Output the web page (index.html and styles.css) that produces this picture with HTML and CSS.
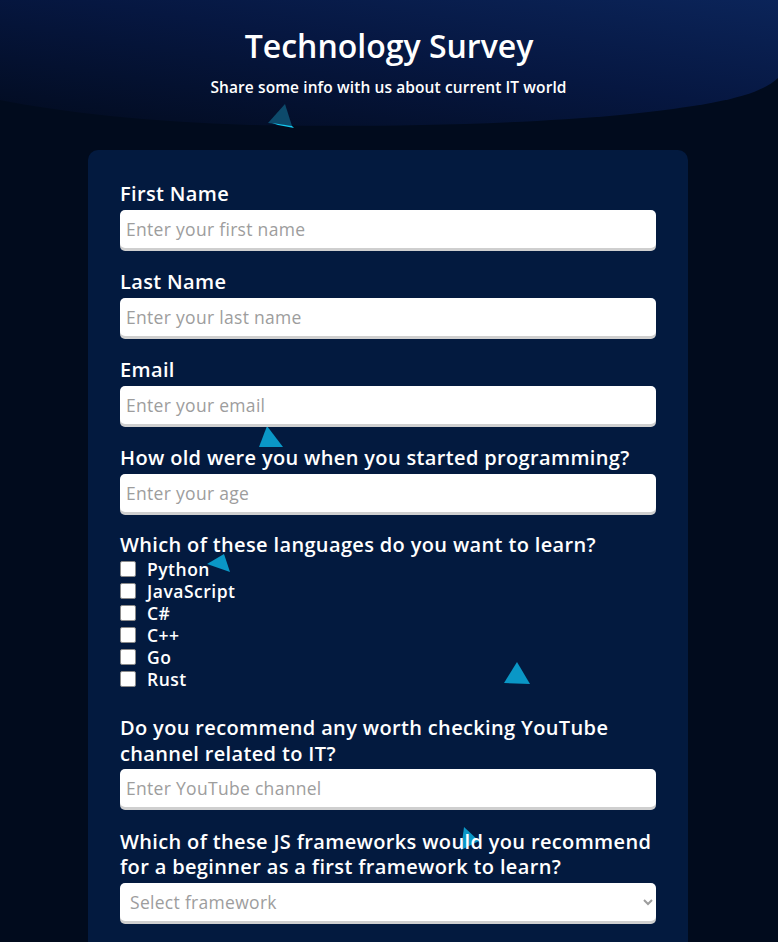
FILE: index.html
```html
<!DOCTYPE html>
<html lang="en">
<head>
    <meta charset="UTF-8">
    <title>Technology Survey</title>
    <link rel="stylesheet" href="styles.css">
</head>
<body>
    <svg class="wave" width="778" height="140" viewBox="0 0 778 140">
        <defs>
            <linearGradient id="waveFill" x1="0" y1="1" x2="1" y2="0">
                <stop offset="0" stop-color="#020b1f"/>
                <stop offset="0.55" stop-color="#061741"/>
                <stop offset="1" stop-color="#0b2459"/>
            </linearGradient>
        </defs>
        <path d="M0,0 H778 V78 C760,95 720,105 620,115 C500,126 350,127 250,125 C150,122 60,112 0,100 Z" fill="url(#waveFill)"/>
    </svg>

    <svg class="tri tri-1" width="30" height="28" viewBox="0 0 30 28"><polygon points="17,0 24,22 0,19" fill="#0d4a6b"/><polygon points="4,19 24,22 26,24 10,21" fill="#14c8f0"/></svg>
    <svg class="tri tri-2" width="26" height="22" viewBox="0 0 26 22"><polygon points="8,0 24,21 0,21" fill="#0a97c6"/></svg>
    <svg class="tri tri-3" width="26" height="22" viewBox="0 0 26 22"><polygon points="17,0 23,18 0,10" fill="#0a97c6"/></svg>
    <svg class="tri tri-4" width="28" height="24" viewBox="0 0 28 24"><polygon points="13,0 26,22 0,21" fill="#0a97c6"/></svg>
    <svg class="tri tri-5" width="20" height="24" viewBox="0 0 20 24"><polygon points="3,0 18,14 0,23" fill="#0a97c6"/></svg>

    <header class="header">
        <h1 class="title">Technology Survey</h1>
        <p class="subtitle">Share some info with us about current IT world</p>
    </header>

    <form class="survey">
        <div class="group">
            <label class="label" for="first-name">First Name</label>
            <input class="field" id="first-name" type="text" placeholder="Enter your first name">
        </div>
        <div class="group">
            <label class="label" for="last-name">Last Name</label>
            <input class="field" id="last-name" type="text" placeholder="Enter your last name">
        </div>
        <div class="group">
            <label class="label" for="email">Email</label>
            <input class="field" id="email" type="email" placeholder="Enter your email">
        </div>
        <div class="group">
            <label class="label" for="age">How old were you when you started programming?</label>
            <input class="field" id="age" type="number" placeholder="Enter your age">
        </div>
        <div class="group group-checks">
            <span class="label">Which of these languages do you want to learn?</span>
            <label class="check"><input type="checkbox"> Python</label>
            <label class="check"><input type="checkbox"> JavaScript</label>
            <label class="check"><input type="checkbox"> C#</label>
            <label class="check"><input type="checkbox"> C++</label>
            <label class="check"><input type="checkbox"> Go</label>
            <label class="check"><input type="checkbox"> Rust</label>
        </div>
        <div class="group">
            <label class="label" for="channel">Do you recommend any worth checking YouTube channel related to IT?</label>
            <input class="field" id="channel" type="text" placeholder="Enter YouTube channel">
        </div>
        <div class="group">
            <label class="label" for="framework">Which of these JS frameworks would you recommend for a beginner as a first framework to learn?</label>
            <select class="field select" id="framework">
                <option value="" disabled selected>Select framework</option>
                <option>React</option>
                <option>Vue</option>
                <option>Angular</option>
                <option>Svelte</option>
            </select>
        </div>
    </form>
</body>
</html>
```

FILE: styles.css
```css
* {
    margin: 0;
    box-sizing: border-box;
}

body {
    background-color: #010b1d;
    font-family: "Open Sans", Lato, sans-serif;
    color: white;
    position: relative;
    min-height: 942px;
    overflow: hidden;
}

.wave {
    position: absolute;
    top: 0;
    left: 0;
    z-index: 1;
}

/* floating particles, drawn over the card but under the text */
.tri {
    position: absolute;
    z-index: 2;
}

.tri-1 { left: 268px; top: 104px; }
.tri-2 { left: 259px; top: 426px; }
.tri-3 { left: 207px; top: 554px; }
.tri-4 { left: 504px; top: 662px; }
.tri-5 { left: 461px; top: 827px; }

.header {
    position: relative;
    z-index: 3;
    text-align: center;
    padding-top: 25px;
    height: 150px;
}

.title {
    font-size: 32px;
    font-weight: 600;
    line-height: 42px;
}

.subtitle {
    margin-top: 10px;
    font-size: 15.5px;
    font-weight: 600;
    letter-spacing: 0.1px;
    line-height: 20px;
    margin-left: -1px;
}

.survey {
    position: relative;
    width: 600px;
    margin-left: 88px;
    padding: 31px 32px 40px;
    background-color: #031a3f;
    border-radius: 10px;
    min-height: 820px;
}

.survey .label,
.survey .check,
.survey .field {
    position: relative;
    z-index: 3;
}

.group {
    margin-bottom: 21.5px;
}

.label {
    display: block;
    font-size: 20px;
    font-weight: 600;
    letter-spacing: 0.35px;
    line-height: 25.5px;
    margin-bottom: 3px;
}

.field {
    display: block;
    width: 100%;
    height: 38px;
    padding: 0 6px;
    border: none;
    border-radius: 5px;
    background-color: white;
    box-shadow: 0 3px 0 #cfcfcf;
    font-family: "Open Sans", Lato, sans-serif;
    font-size: 17.5px;
    letter-spacing: 0.3px;
    color: #333;
}

.field::placeholder {
    color: #9d9d9d;
}

.select {
    color: #9d9d9d;
    padding-left: 6px;
}

.group-checks {
    margin-bottom: 25px;
}

.group-checks .label {
    line-height: 24px;
    margin-bottom: 1px;
}

.check {
    display: flex;
    align-items: center;
    gap: 11px;
    height: 22px;
    font-size: 17.5px;
    font-weight: 600;
    letter-spacing: 0.5px;
}

.check input {
    appearance: none;
    width: 16px;
    height: 16px;
    margin: 0;
    background-color: white;
    border: 1px solid #8a8a8a;
    border-radius: 2px;
}
```
